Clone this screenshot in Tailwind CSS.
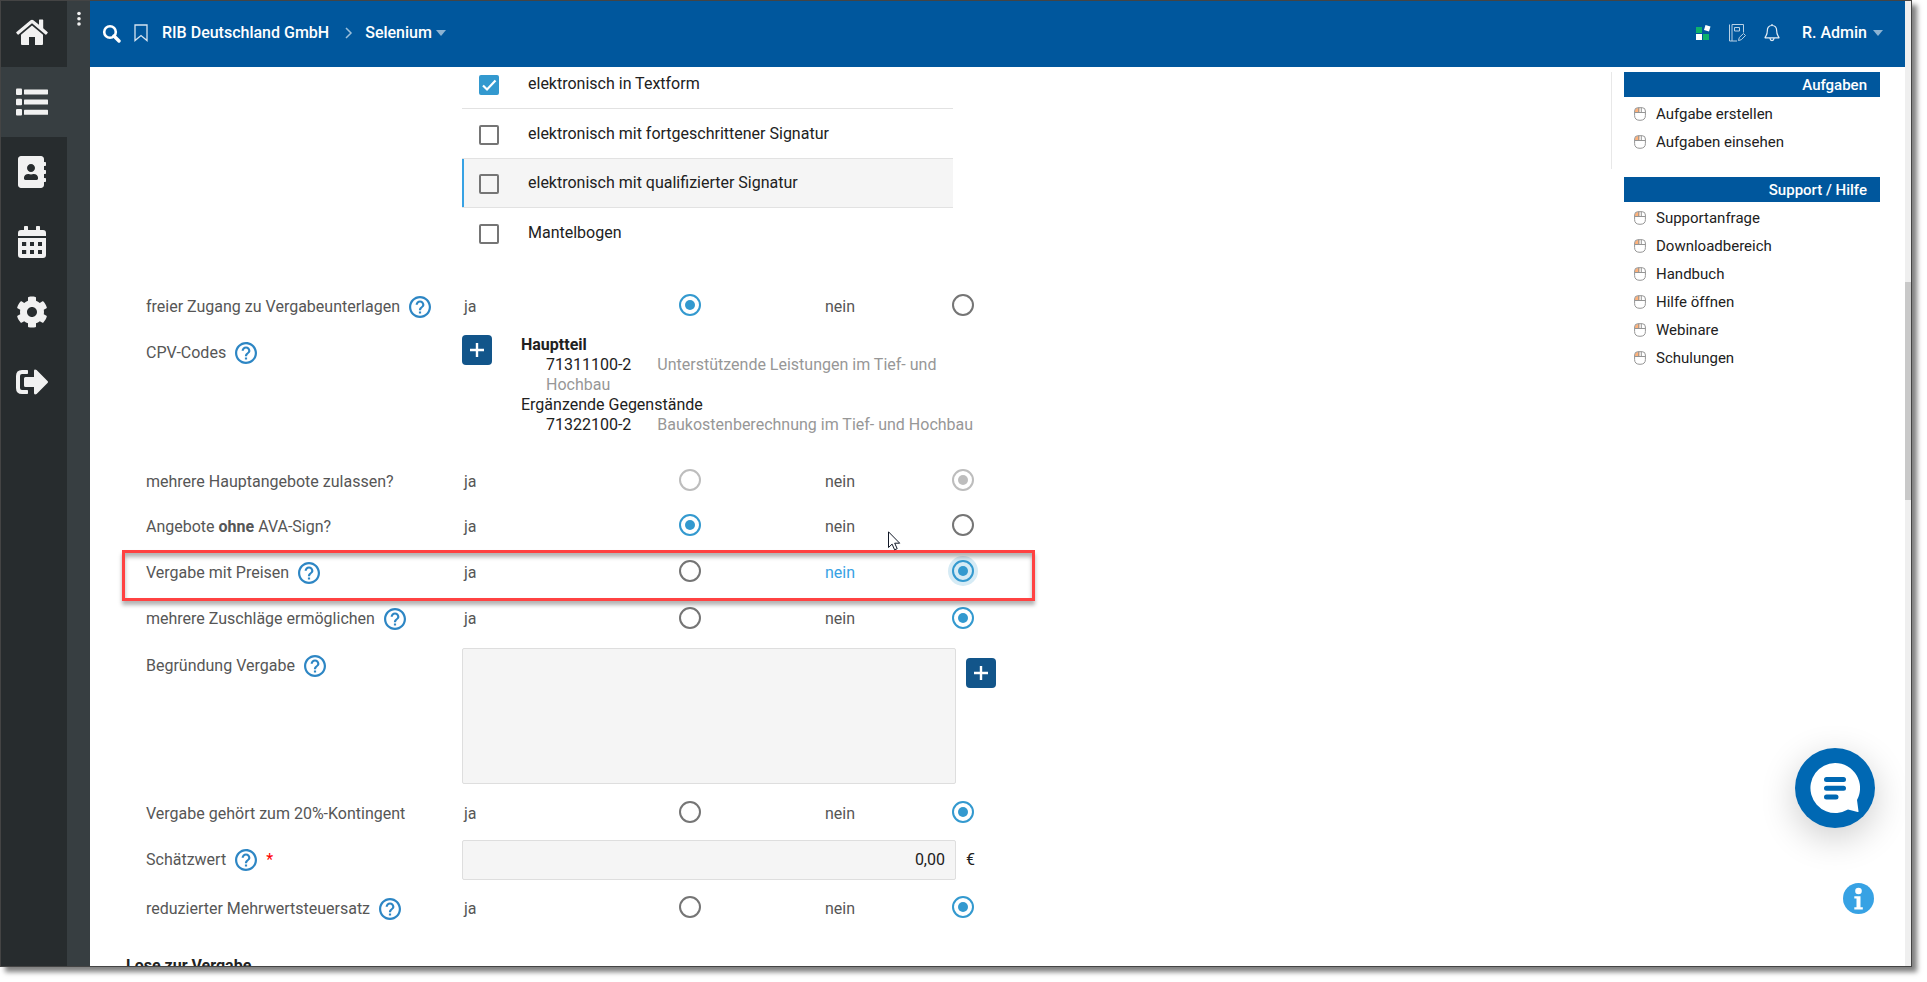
<!DOCTYPE html>
<html lang="de">
<head>
<meta charset="utf-8">
<title>RIB Deutschland GmbH – Selenium</title>
<script src="https://cdn.jsdelivr.net/npm/@tailwindcss/browser@4"></script>
</head>
<body class="bg-white font-['Roboto','Liberation_Sans',sans-serif] text-base text-[#212121]">

<svg class="hidden" aria-hidden="true">
  <symbol id="help" viewBox="2 2 20 20"><path fill="currentColor" d="M11 18h2v-2h-2v2zm1-16C6.480 2 2 6.480 2 12s4.480 10 10 10 10-4.480 10-10S17.520 2 12 2zm0 18c-4.410 0-8-3.590-8-8s3.590-8 8-8 8 3.590 8 8-3.590 8-8 8zm0-14c-2.210 0-4 1.790-4 4h2c0-1.100.9-2 2-2s2 .9 2 2c0 2-3 1.750-3 5h2c0-2.250 3-2.500 3-5 0-2.210-1.790-4-4-4z"/></symbol>
  <symbol id="plus" viewBox="0 0 14 14"><path d="M7 0v14M0 7h14" stroke="currentColor" stroke-width="2.400"/></symbol>
  <symbol id="caret" viewBox="0 0 10 6"><path d="M0 0h10L5 6z" fill="currentColor"/></symbol>
  <symbol id="mouse" viewBox="0 0 12 14">
    <path d="M1 5.500V4Q1 1 4 1h1.500v4.500z" fill="#ffb27a"/>
    <path d="M3.800.7h4.400Q11.400.7 11.400 4v4.600q0 4.700-5.400 4.700T.6 8.600V4Q.6.7 3.800.7zM.6 5.500h10.800M4.700.7v4.800M7.300.7v4.800" fill="none" stroke="#959595"/>
  </symbol>
</svg>

<div class="h-screen pr-[15px] pb-[15px]">
<div class="relative flex h-full overflow-hidden border border-[#444] bg-white shadow-[5px_5px_5px_rgba(0,0,0,0.5)]">

  <nav class="flex w-[66px] shrink-0 flex-col bg-[#272c2e] text-[#f1f1f1]" aria-label="Hauptmenü">
    <a href="#" aria-label="Startseite" class="flex h-[66px] items-center justify-center pr-1 pb-1">
      <svg class="size-8" viewBox="0 0 32 32"><path fill="currentColor" d="M16 9.500 27 18.800V28q0 1-1 1h-7v-8h-6v8H6q-1 0-1-1v-9.200z"/><path fill="currentColor" d="M14.600 4.200q1.400-1.100 2.800 0L23 8.800V4q0-.6.6-.6h3q.6 0 .6.600v8.300l4.300 3.600q.6.600.1 1.200l-1 1.200q-.6.600-1.200.1L16 7.300 2.600 18.400q-.6.500-1.200-.1l-1-1.200q-.5-.6.1-1.200z"/></svg>
    </a>
    <a href="#" aria-label="Liste" class="flex h-[70px] items-center justify-center bg-[#373e41] pr-1">
      <svg class="size-8" viewBox="0 0 32 32" fill="currentColor"><rect y="2.500" width="6" height="6.500" rx="1"/><rect y="12.700" width="6" height="6.500" rx="1"/><rect y="23" width="6" height="6.500" rx="1"/><rect x="8" y="3.400" width="24" height="5" rx=".6"/><rect x="8" y="13.600" width="24" height="5" rx=".6"/><rect x="8" y="23.800" width="24" height="5" rx=".6"/></svg>
    </a>
    <a href="#" aria-label="Adressbuch" class="flex h-[70px] items-center justify-center pr-1">
      <svg class="size-8" viewBox="-32 0 512 512" fill="currentColor"><path d="M436 160c6.600 0 12-5.400 12-12v-40c0-6.600-5.400-12-12-12h-20V48c0-26.500-21.500-48-48-48H48C21.500 0 0 21.500 0 48v416c0 26.500 21.500 48 48 48h320c26.500 0 48-21.500 48-48v-48h20c6.600 0 12-5.400 12-12v-40c0-6.600-5.400-12-12-12h-20v-64h20c6.600 0 12-5.400 12-12v-40c0-6.600-5.400-12-12-12h-20v-64h20zm-228-32c35.300 0 64 28.700 64 64s-28.700 64-64 64-64-28.700-64-64 28.700-64 64-64zm112 236.800c0 10.600-10 19.200-22.400 19.200H118.400C106 384 96 375.400 96 364.800v-19.200c0-31.800 30.100-57.600 67.200-57.600h5c12.300 5.100 25.700 8 39.800 8s27.600-2.900 39.800-8h5c37.100 0 67.200 25.800 67.200 57.600v19.200z"/></svg>
    </a>
    <a href="#" aria-label="Kalender" class="flex h-[70px] items-center justify-center pr-1">
      <svg class="size-8" viewBox="0 0 32 32" fill="currentColor"><path d="M2 10V7q0-3 3-3h3V.8q0-.8.8-.8h2.400q.8 0 .8.800V4h8V.8q0-.8.8-.8h2.400q.8 0 .8.800V4h3q3 0 3 3v3z"/><path fill-rule="evenodd" d="M2 12h28v17q0 3-3 3H5q-3 0-3-3zm4 4v4h4.200v-4zm8 0v4h4v-4zm8 0v4h4v-4zM6 24v4h4.200v-4zm8 0v4h4v-4zm8 0v4h4v-4z"/></svg>
    </a>
    <a href="#" aria-label="Einstellungen" class="flex h-[70px] items-center justify-center pr-1">
      <svg class="size-8" viewBox="0 0 512 512" fill="currentColor"><path d="M487.400 315.700l-42.600-24.600c4.300-23.200 4.300-47 0-70.200l42.600-24.600c4.900-2.800 7.100-8.600 5.500-14-11.100-35.600-30-67.800-54.700-94.600-3.800-4.100-10-5.100-14.800-2.300L380.800 110c-17.900-15.400-38.500-27.300-60.800-35.100V25.800c0-5.600-3.900-10.500-9.400-11.700-36.700-8.200-74.300-7.800-109.200 0-5.500 1.200-9.400 6.100-9.400 11.700V75c-22.200 7.900-42.800 19.800-60.800 35.100L88.700 85.500c-4.900-2.800-11-1.900-14.800 2.300-24.700 26.700-43.600 58.900-54.700 94.600-1.700 5.400.6 11.200 5.500 14L67.300 221c-4.300 23.200-4.300 47 0 70.200l-42.600 24.600c-4.900 2.800-7.100 8.600-5.500 14 11.100 35.600 30 67.800 54.700 94.600 3.800 4.100 10 5.100 14.800 2.300l42.600-24.600c17.900 15.400 38.500 27.300 60.800 35.100v49.200c0 5.600 3.900 10.500 9.400 11.700 36.700 8.200 74.300 7.800 109.200 0 5.500-1.200 9.400-6.100 9.400-11.700v-49.200c22.200-7.900 42.800-19.800 60.800-35.100l42.600 24.600c4.900 2.800 11 1.900 14.800-2.300 24.700-26.700 43.600-58.900 54.700-94.600 1.500-5.500-.7-11.300-5.600-14.100zM256 336c-44.100 0-80-35.900-80-80s35.900-80 80-80 80 35.900 80 80-35.900 80-80 80z"/></svg>
    </a>
    <a href="#" aria-label="Abmelden" class="flex h-[70px] items-center justify-center pr-1">
      <svg class="size-8" viewBox="0 0 32 32" fill="currentColor"><path d="M6 4h5.200q.8 0 .8.800v2.400q0 .8-.8.800H6q-2 0-2 2v12q0 2 2 2h5.200q.8 0 .8.800v2.400q0 .8-.8.800H6q-6 0-6-6V10q0-6 6-6z"/><path d="M31.500 17.100 20.600 28q-2.600 1.200-2.600-1v-6H9.500q-1.500 0-1.500-1.500v-7Q8 11 9.500 11H18V5q0-2.200 2.600-1l10.900 10.900q1 1.100 0 2.200z"/></svg>
    </a>
  </nav>

  <div class="flex w-[23px] shrink-0 justify-center bg-[#373e41]">
    <button type="button" aria-label="Menü" class="mt-2.5 h-4 text-[#f1f1f1]"><svg class="h-4 w-1" viewBox="0 0 4 16" fill="currentColor"><circle cx="2" cy="2.500" r="1.800"/><circle cx="2" cy="7.700" r="1.800"/><circle cx="2" cy="13" r="1.800"/></svg></button>
  </div>

  <div class="flex min-w-0 flex-1 flex-col">
    <header class="flex h-[66px] shrink-0 items-center justify-between bg-[#00579d] pr-[22px] pb-0.5 pl-3 font-medium text-white">
      <div class="flex items-center">
        <button type="button" aria-label="Suche"><svg class="size-[19px]" viewBox="0 0 19 19" fill="none" stroke="currentColor"><circle cx="8" cy="8" r="5.800" stroke-width="2.600"/><path d="m12 12 5 5" stroke-width="3.400" stroke-linecap="round"/></svg></button>
        <button type="button" aria-label="Lesezeichen" class="ml-3"><svg class="h-[18px] w-4" viewBox="0 0 16 18" fill="none" stroke="#d5e4f0" stroke-width="1.300"><path d="M2 1h12v15.500l-6-5-6 5z"/></svg></button>
        <a href="#" class="ml-[13px]">RIB Deutschland GmbH</a>
        <svg class="ml-4 h-3 w-2" viewBox="0 0 8 12" fill="none" stroke="#9bbfdb" stroke-width="1.500"><path d="m1 1 5 5-5 5"/></svg>
        <button type="button" class="ml-3 flex items-center gap-1">Selenium<svg class="h-1.5 w-2.5 text-[#8cb3d3]"><use href="#caret"/></svg></button>
      </div>
      <div class="flex items-center">
        <button type="button" aria-label="Anwendungen"><svg class="size-4" viewBox="0 0 16 16"><path fill="#0eb26b" d="M1 2h6v6H1zM8 9h6v6H8z"/><path fill="#fff" d="M1 9h6v6H1zM10.500 0l5 1.500-1.500 5-5-1.500z"/></svg></button>
        <button type="button" aria-label="Notizen" class="ml-[17px]"><svg class="size-[18px]" viewBox="0 0 18 18" fill="none" stroke="#b9d1e5" stroke-width="1"><path d="M1.500.5v16.500H9M4 .5V17M4 .5h11.500v8M6.500 3.500h5v3.500h-5z"/><path d="m10.500 16.500.8-3 4.200-4 2 2-4.200 4.200z"/></svg></button>
        <button type="button" aria-label="Benachrichtigungen" class="ml-[18px]"><svg class="h-[18px] w-4" viewBox="0 0 16 18" fill="none" stroke="#e4eef6" stroke-width="1.200" stroke-linejoin="round"><path d="M8 1.500C4.500 1.500 3.300 4 3.300 7c0 4-1.300 4.300-2.300 6.800h14c-1-2.500-2.300-2.800-2.300-6.800 0-3-1.200-5.500-4.700-5.500zM8 0v1.500M6 14.500c.3 2.700 3.700 2.700 4 0"/></svg></button>
        <button type="button" class="ml-[22px] flex items-center gap-1.5">R. Admin<svg class="h-1.5 w-2.5 text-[#8cb3d3]"><use href="#caret"/></svg></button>
      </div>
    </header>

    <div class="flex min-h-0 flex-1 items-start justify-between overflow-hidden">
      <form class="ml-8 w-[913px] shrink-0">

        <fieldset class="ml-[340px] w-[491px]">
          <label class="flex h-[42px] items-center border-b border-[#e2e2e2] pb-2 pl-[17px]">
            <span class="grid pt-0.5"><input type="checkbox" checked class="peer col-start-1 row-start-1 size-5 appearance-none rounded-xs border-2 border-[#757575] checked:border-[#3399cf] checked:bg-[#3399cf]"><svg class="col-start-1 row-start-1 size-5" viewBox="0 0 20 20" fill="none" stroke="#fff" stroke-width="2.200"><path d="m4 10.500 4 4L16.500 5.500"/></svg></span>
            <span class="ml-[29px]">elektronisch in Textform</span>
          </label>
          <label class="flex h-[50px] items-center border-b border-[#e2e2e2] pl-[17px]">
            <span class="grid pt-0.5"><input type="checkbox" class="size-5 appearance-none rounded-xs border-2 border-[#757575]"></span>
            <span class="ml-[29px]">elektronisch mit fortgeschrittener Signatur</span>
          </label>
          <label class="flex h-[49px] items-center border-b border-[#e2e2e2] bg-[#f5f5f5] pl-[17px] shadow-[inset_2px_0_#37a2e4]">
            <span class="grid pt-0.5"><input type="checkbox" class="size-5 appearance-none rounded-xs border-2 border-[#757575]"></span>
            <span class="ml-[29px]">elektronisch mit qualifizierter Signatur</span>
          </label>
          <label class="flex h-[50px] items-center pl-[17px]">
            <span class="grid pt-0.5"><input type="checkbox" class="size-5 appearance-none rounded-xs border-2 border-[#757575]"></span>
            <span class="ml-[29px]">Mantelbogen</span>
          </label>
        </fieldset>

        <fieldset class="mt-6 grid h-[49px] grid-cols-[318px_215px_146px_127px_auto] items-center pl-6 text-[#565656]" aria-labelledby="l1">
          <div class="flex items-center gap-[9px]"><span id="l1">freier Zugang zu Vergabeunterlagen</span><button type="button" aria-label="Hilfe" class="text-[#2d86c4]"><svg class="size-[22px]"><use href="#help"/></svg></button></div>
          <label for="r1j">ja</label><span class="flex pb-[3px]"><input id="r1j" name="r1" type="radio" checked class="grid size-[22px] appearance-none place-content-center rounded-full border-2 border-[#757575] before:size-2.5 before:rounded-full checked:border-[#3399cf] checked:before:bg-[#3399cf]"></span>
          <label for="r1n">nein</label><span class="flex pb-[3px]"><input id="r1n" name="r1" type="radio" class="grid size-[22px] appearance-none place-content-center rounded-full border-2 border-[#757575] before:size-2.5 before:rounded-full checked:border-[#3399cf] checked:before:bg-[#3399cf]"></span>
        </fieldset>

        <div class="flex h-[128px] pt-1 pl-6">
          <div class="flex h-9 w-[316px] items-center gap-[9px] text-[#565656]"><span>CPV-Codes</span><button type="button" aria-label="Hilfe" class="text-[#2d86c4]"><svg class="size-[22px]"><use href="#help"/></svg></button></div>
          <button type="button" aria-label="CPV-Code hinzufügen" class="grid size-[30px] place-content-center rounded bg-[#12558a] text-white"><svg class="size-3.5"><use href="#plus"/></svg></button>
          <dl class="ml-[29px] w-[468px] leading-5">
            <dt class="font-bold">Hauptteil</dt>
            <dd class="pl-[25px]">71311100-2<span class="ml-[26px] text-[#979797]">Unterstützende Leistungen im Tief- und Hochbau</span></dd>
            <dt>Ergänzende Gegenstände</dt>
            <dd class="pl-[25px]">71322100-2<span class="ml-[26px] text-[#979797]">Baukostenberechnung im Tief- und Hochbau</span></dd>
          </dl>
        </div>

        <fieldset disabled class="grid h-[45px] grid-cols-[318px_215px_146px_127px_auto] items-center pl-6 text-[#565656]" aria-labelledby="l2">
          <span id="l2">mehrere Hauptangebote zulassen?</span>
          <label for="r2j">ja</label><span class="flex pb-[3px]"><input id="r2j" name="r2" type="radio" class="grid size-[22px] appearance-none place-content-center rounded-full border-2 border-[#bdbdbd] before:size-2.5 before:rounded-full"></span>
          <label for="r2n">nein</label><span class="flex pb-[3px]"><input id="r2n" name="r2" type="radio" checked class="grid size-[22px] appearance-none place-content-center rounded-full border-2 border-[#bdbdbd] before:size-2.5 before:rounded-full checked:before:bg-[#bdbdbd]"></span>
        </fieldset>

        <fieldset class="grid h-[45px] grid-cols-[318px_215px_146px_127px_auto] items-center pl-6 text-[#565656]" aria-labelledby="l3">
          <span id="l3">Angebote <b>ohne</b> AVA-Sign?</span>
          <label for="r3j">ja</label><span class="flex pb-[3px]"><input id="r3j" name="r3" type="radio" checked class="grid size-[22px] appearance-none place-content-center rounded-full border-2 border-[#757575] before:size-2.5 before:rounded-full checked:border-[#3399cf] checked:before:bg-[#3399cf]"></span>
          <label for="r3n">nein</label><span class="flex pb-[3px]"><input id="r3n" name="r3" type="radio" class="grid size-[22px] appearance-none place-content-center rounded-full border-2 border-[#757575] before:size-2.5 before:rounded-full checked:border-[#3399cf] checked:before:bg-[#3399cf]"></span>
        </fieldset>

        <fieldset class="relative grid h-[47px] grid-cols-[318px_215px_146px_127px_auto] items-center pl-6 text-[#565656]" aria-labelledby="l4">
          <div class="flex items-center gap-[9px]"><span id="l4">Vergabe mit Preisen</span><button type="button" aria-label="Hilfe" class="text-[#2d86c4]"><svg class="size-[22px]"><use href="#help"/></svg></button></div>
          <label for="r4j">ja</label><span class="flex pb-[3px]"><input id="r4j" name="r4" type="radio" class="grid size-[22px] appearance-none place-content-center rounded-full border-2 border-[#757575] before:size-2.5 before:rounded-full checked:border-[#3399cf] checked:before:bg-[#3399cf]"></span>
          <label for="r4n" class="text-[#37a2e4]">nein</label><span class="flex pb-[3px]"><input id="r4n" name="r4" type="radio" checked class="grid size-[22px] appearance-none place-content-center rounded-full border-2 border-[#757575] bg-[#d6ebf5] ring-4 ring-[#d6ebf5] before:size-2.5 before:rounded-full checked:border-[#3399cf] checked:before:bg-[#3399cf]"></span>
          <!-- highlighted row -->
          <div class="pointer-events-none absolute inset-x-0 top-px h-[51px] border-3 border-[#ff4242] shadow-[0_4px_4px_rgba(0,0,0,0.3),inset_0_4px_4px_rgba(0,0,0,0.3)]"></div>
          <svg class="pointer-events-none absolute -top-[18px] left-[766px] h-5 w-[13px]" viewBox="0 0 13 20"><path d="M.5.800v15.700l3.600-3.400 2.500 5.700 2.600-1.100-2.500-5.500h5z" fill="#fff" stroke="#111827"/></svg>
        </fieldset>

        <fieldset class="grid h-[46px] grid-cols-[318px_215px_146px_127px_auto] items-center pl-6 text-[#565656]" aria-labelledby="l5">
          <div class="flex items-center gap-[9px]"><span id="l5">mehrere Zuschläge ermöglichen</span><button type="button" aria-label="Hilfe" class="text-[#2d86c4]"><svg class="size-[22px]"><use href="#help"/></svg></button></div>
          <label for="r5j">ja</label><span class="flex pb-[3px]"><input id="r5j" name="r5" type="radio" class="grid size-[22px] appearance-none place-content-center rounded-full border-2 border-[#757575] before:size-2.5 before:rounded-full checked:border-[#3399cf] checked:before:bg-[#3399cf]"></span>
          <label for="r5n">nein</label><span class="flex pb-[3px]"><input id="r5n" name="r5" type="radio" checked class="grid size-[22px] appearance-none place-content-center rounded-full border-2 border-[#757575] before:size-2.5 before:rounded-full checked:border-[#3399cf] checked:before:bg-[#3399cf]"></span>
        </fieldset>

        <div class="flex h-[148px] py-1.5 pl-6">
          <div class="flex h-9 w-[316px] items-center gap-[9px] text-[#565656]"><label for="reason">Begründung Vergabe</label><button type="button" aria-label="Hilfe" class="text-[#2d86c4]"><svg class="size-[22px]"><use href="#help"/></svg></button></div>
          <textarea id="reason" class="h-full w-[494px] resize-none rounded-xs border border-[#dedede] bg-[#f5f5f5] p-2"></textarea>
          <button type="button" aria-label="Begründung hinzufügen" class="mt-2.5 ml-2.5 grid size-[30px] place-content-center rounded bg-[#12558a] text-white"><svg class="size-3.5"><use href="#plus"/></svg></button>
        </div>

        <fieldset class="grid h-[47px] grid-cols-[318px_215px_146px_127px_auto] items-center pl-6 text-[#565656]" aria-labelledby="l6">
          <span id="l6">Vergabe gehört zum 20%-Kontingent</span>
          <label for="r6j">ja</label><span class="flex pb-[3px]"><input id="r6j" name="r6" type="radio" class="grid size-[22px] appearance-none place-content-center rounded-full border-2 border-[#757575] before:size-2.5 before:rounded-full checked:border-[#3399cf] checked:before:bg-[#3399cf]"></span>
          <label for="r6n">nein</label><span class="flex pb-[3px]"><input id="r6n" name="r6" type="radio" checked class="grid size-[22px] appearance-none place-content-center rounded-full border-2 border-[#757575] before:size-2.5 before:rounded-full checked:border-[#3399cf] checked:before:bg-[#3399cf]"></span>
        </fieldset>

        <div class="flex h-[45px] items-center pl-6">
          <div class="flex w-[316px] items-center gap-[9px] text-[#565656]"><label for="value">Schätzwert</label><button type="button" aria-label="Hilfe" class="text-[#2d86c4]"><svg class="size-[22px]"><use href="#help"/></svg></button><span class="text-[#f00]">*</span></div>
          <input id="value" type="text" value="0,00" class="h-10 w-[494px] rounded-xs border border-[#dedede] bg-[#f5f5f5] px-2.5 text-right">
          <span class="ml-2.5">€</span>
        </div>

        <fieldset class="grid h-[53px] grid-cols-[318px_215px_146px_127px_auto] items-center pl-6 text-[#565656]" aria-labelledby="l7">
          <div class="flex items-center gap-[9px]"><span id="l7">reduzierter Mehrwertsteuersatz</span><button type="button" aria-label="Hilfe" class="text-[#2d86c4]"><svg class="size-[22px]"><use href="#help"/></svg></button></div>
          <label for="r7j">ja</label><span class="flex pb-[3px]"><input id="r7j" name="r7" type="radio" class="grid size-[22px] appearance-none place-content-center rounded-full border-2 border-[#757575] before:size-2.5 before:rounded-full checked:border-[#3399cf] checked:before:bg-[#3399cf]"></span>
          <label for="r7n">nein</label><span class="flex pb-[3px]"><input id="r7n" name="r7" type="radio" checked class="grid size-[22px] appearance-none place-content-center rounded-full border-2 border-[#757575] before:size-2.5 before:rounded-full checked:border-[#3399cf] checked:before:bg-[#3399cf]"></span>
        </fieldset>

        <h2 class="mt-[19px] pl-1 font-bold">Lose zur Vergabe</h2>
      </form>

      <aside class="mt-[5px] mr-[25px] w-[269px] shrink-0 text-[15px]">
        <section class="h-[97px] border-l border-[#e8e8e8] pl-3">
          <h2 class="h-[25px] bg-[#00579d] pr-[13px] text-right leading-[26px] font-medium text-white">Aufgaben</h2>
          <ul class="pt-[3px] pl-2.5">
            <li><a href="#" class="flex h-7 items-center gap-2.5"><svg class="h-3.5 w-3"><use href="#mouse"/></svg>Aufgabe erstellen</a></li>
            <li><a href="#" class="flex h-7 items-center gap-2.5"><svg class="h-3.5 w-3"><use href="#mouse"/></svg>Aufgaben einsehen</a></li>
          </ul>
        </section>
        <section class="mt-2 pl-[13px]">
          <h2 class="h-[25px] bg-[#00579d] pr-[13px] text-right leading-[26px] font-medium text-white">Support / Hilfe</h2>
          <ul class="pt-0.5 pl-2.5">
            <li><a href="#" class="flex h-7 items-center gap-2.5"><svg class="h-3.5 w-3"><use href="#mouse"/></svg>Supportanfrage</a></li>
            <li><a href="#" class="flex h-7 items-center gap-2.5"><svg class="h-3.5 w-3"><use href="#mouse"/></svg>Downloadbereich</a></li>
            <li><a href="#" class="flex h-7 items-center gap-2.5"><svg class="h-3.5 w-3"><use href="#mouse"/></svg>Handbuch</a></li>
            <li><a href="#" class="flex h-7 items-center gap-2.5"><svg class="h-3.5 w-3"><use href="#mouse"/></svg>Hilfe öffnen</a></li>
            <li><a href="#" class="flex h-7 items-center gap-2.5"><svg class="h-3.5 w-3"><use href="#mouse"/></svg>Webinare</a></li>
            <li><a href="#" class="flex h-7 items-center gap-2.5"><svg class="h-3.5 w-3"><use href="#mouse"/></svg>Schulungen</a></li>
          </ul>
        </section>
      </aside>
    </div>
  </div>

  <!-- scrollbar -->
  <div class="w-1.5 shrink-0 bg-[#efefef] pt-[281px]"><div class="h-[218px] bg-[#c9c9c9]"></div></div>

  <!-- floating buttons -->
  <button type="button" aria-label="Chat" class="absolute right-9 bottom-[138px] grid size-20 place-content-center rounded-full bg-[#0068b3] shadow-[0_10px_36px_rgba(0,0,0,0.2)]">
    <svg class="size-[50px]" viewBox="0 0 50 50"><path fill="#fff" d="M25 0a25 25 0 0 1 22 37l1.500 11.300q.1.800-.8.700L38 46.600A25 25 0 1 1 25 0z"/><path d="M16.500 16.500h17M16.500 25.300h17M16.500 34h9.500" stroke="#0068b3" stroke-width="5" stroke-linecap="round"/></svg>
  </button>
  <button type="button" aria-label="Info" class="absolute right-[37px] bottom-[52px] rounded-full">
    <svg class="size-[31px]" viewBox="0 0 31 31"><circle cx="15.500" cy="15.500" r="15.500" fill="#37a2e4"/><circle cx="15.500" cy="8" r="3.300" fill="#fff"/><path d="M11.300 13.300h6.200v11h2.300v2.300h-8.500v-2.300h2.200v-8.700h-2.200z" fill="#fff"/></svg>
  </button>
</div>
</div>
</body>
</html>
